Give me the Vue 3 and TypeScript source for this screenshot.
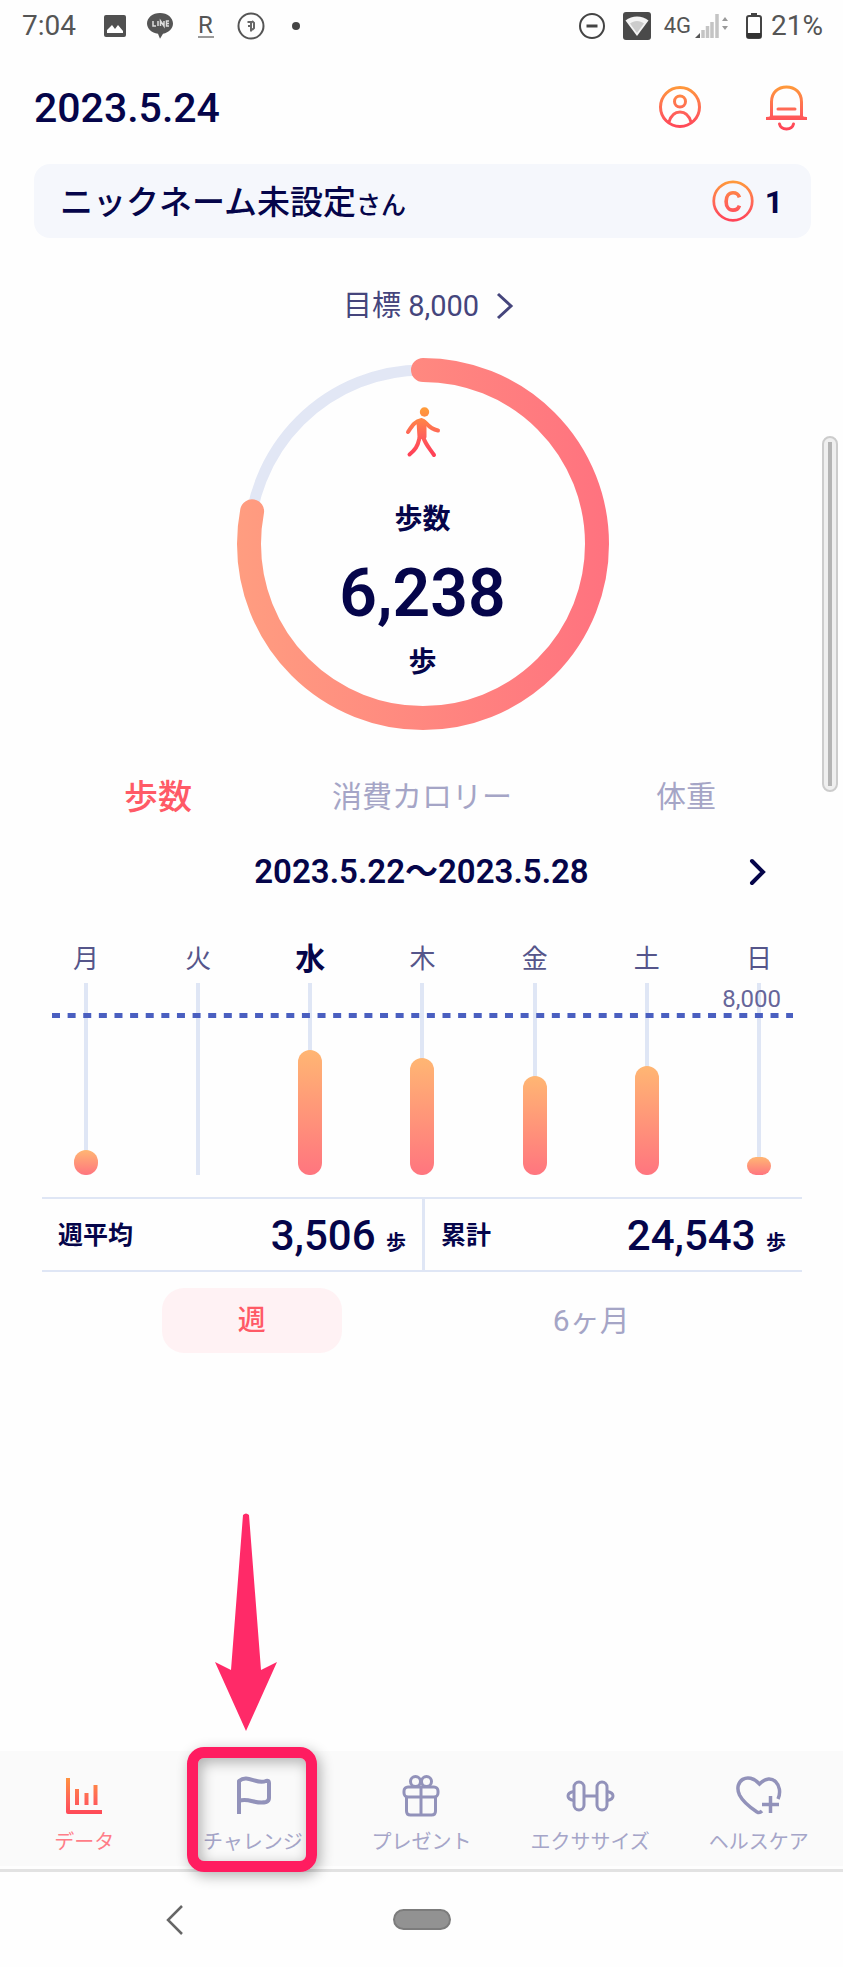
<script setup lang="ts">
interface Day {
  label: string
  height: number
  today?: boolean
}

const days: Day[] = [
  { label: '月', height: 25 },
  { label: '火', height: 0 },
  { label: '水', height: 125, today: true },
  { label: '木', height: 117 },
  { label: '金', height: 99 },
  { label: '土', height: 109 },
  { label: '日', height: 18 },
]

const goal = 8000
const steps = 6238
const radius = 174
const circumference = 2 * Math.PI * radius
const arc = `${(circumference * steps) / goal} ${circumference}`
const format = (n: number): string => n.toLocaleString('en-US')
</script>

<template>
  <div class="page">
    <svg class="defs" width="0" height="0" aria-hidden="true">
      <defs>
        <linearGradient id="warm" gradientUnits="userSpaceOnUse" x1="0" y1="2" x2="0" y2="46">
          <stop offset="0" stop-color="#ff9a3a" />
          <stop offset="0.6" stop-color="#ff6259" />
          <stop offset="1" stop-color="#ff4257" />
        </linearGradient>
        <linearGradient id="ring" gradientUnits="userSpaceOnUse" x1="0" y1="0" x2="0" y2="372">
          <stop offset="0" stop-color="#ff9d80" />
          <stop offset="1" stop-color="#ff727f" />
        </linearGradient>
      </defs>
    </svg>

    <div class="status">
      <span class="clock">7:04</span>
      <svg class="s-image" width="24" height="24" viewBox="0 0 24 24">
        <rect x="1" y="1" width="22" height="22" rx="2" fill="#505050" />
        <path d="M4 19v-3l5-5 3 4 3-4 5 6v2z" fill="#fff" />
      </svg>
      <svg class="s-line" width="28" height="28" viewBox="0 0 28 28">
        <path d="M14 1C6.500 1 1 5.800 1 11.500c0 5 4.500 9.300 11 10.300l2 5 3-5c6-1.300 10-5.500 10-10.300C27 5.800 21.500 1 14 1z" fill="#555" />
        <path d="M7 9v5h3M12 9v5M14.500 14V9l3.500 5V9M23 9h-2.500v5H23M20.500 11.500H23" fill="none" stroke="#ddd" stroke-width="1.500" />
      </svg>
      <span class="s-r">R</span>
      <svg class="s-coin" width="28" height="28" viewBox="0 0 28 28">
        <circle cx="14" cy="14" r="12.500" fill="none" stroke="#555" stroke-width="2" />
        <path d="M10.500 10H14v9.500M11 14h3M15 9l2 2v5l-2 2" fill="none" stroke="#666" stroke-width="2" />
      </svg>
      <span class="s-dot"></span>
      <span class="grow"></span>
      <svg class="s-dnd" width="28" height="28" viewBox="0 0 28 28">
        <circle cx="14" cy="14" r="12" fill="none" stroke="#444" stroke-width="2" />
        <path d="M8.500 14h11" stroke="#444" stroke-width="3" />
      </svg>
      <svg class="s-wifi" width="30" height="30" viewBox="0 0 30 30">
        <rect x="1" y="1" width="28" height="28" rx="3" fill="#4a4a4a" />
        <path d="M3.500 9.500C10 4 20 4 26.500 9.500L15 25z" fill="#f4f4f4" />
        <path d="M8 12.500c4-3.500 10-3.500 14 0L15 22z" fill="#ccc" />
      </svg>
      <span class="s-net">4G</span>
      <svg class="s-signal" width="34" height="26" viewBox="0 0 34 26">
        <path d="M0 25l5-5v5z" fill="#555" />
        <path d="M8 25v-8M12.500 25v-12M17 25V9M22 25V1" stroke="#c4c4c4" stroke-width="3.500" />
        <path d="M27 8l3-4 3 4zM27 13l3 4 3-4z" fill="#999" />
      </svg>
      <svg class="s-battery" width="18" height="28" viewBox="0 0 18 28">
        <path d="M6 1h6v3h-6z" fill="#444" />
        <rect x="2" y="4" width="14" height="22" rx="2" fill="none" stroke="#444" stroke-width="2" />
        <path d="M2 21h14v5H2z" fill="#333" />
      </svg>
      <span class="clock">21%</span>
    </div>

    <header class="header">
      <h1 class="today">2023.5.24</h1>
      <button class="icon-btn" type="button" aria-label="プロフィール">
        <svg width="48" height="48" viewBox="0 0 48 48" fill="none" stroke="url(#warm)" stroke-width="3">
          <circle cx="24" cy="23" r="19.500" />
          <circle cx="24" cy="17.500" r="5.500" />
          <path d="M13 38c2-6.500 6-10 11-10s9 3.500 11 10" />
        </svg>
      </button>
      <button class="icon-btn" type="button" aria-label="お知らせ">
        <svg width="48" height="48" viewBox="0 0 48 48" fill="none" stroke="url(#warm)" stroke-width="3" stroke-linecap="round">
          <path d="M9.500 33V18C9.500 8.500 16 3 24.500 3s15 5.500 15 15v15" />
          <path d="M4 34.500c3 0 5-1 5.500-1.500h30c.5.500 2.500 1.500 5.500 1.500zM16 25h17M17.500 40c1.500 6.500 12.500 6.500 14 0" />
        </svg>
      </button>
    </header>

    <main class="main">
      <section class="user">
        <p class="user-name">ニックネーム未設定<small>さん</small></p>
        <svg width="44" height="44" viewBox="0 0 48 48" fill="none" stroke="url(#warm)">
          <circle cx="24" cy="24" r="21" stroke-width="3" />
          <path d="M31 20c-1-3-3.500-5-7-5-4.500 0-7.500 4-7.500 9.500s3 9.500 7.500 9.500c3.500 0 6-2 7-5" stroke-width="4" />
        </svg>
        <span class="coins">1</span>
      </section>

      <button class="goal" type="button">
        目標 {{ format(goal) }}
        <svg width="18" height="28" viewBox="0 0 18 28" fill="none" stroke="#45457c" stroke-width="3">
          <path d="M2 2l13 12L2 26" />
        </svg>
      </button>

      <section class="gauge">
        <svg class="gauge-ring" viewBox="0 0 372 372" fill="none" aria-hidden="true">
          <circle cx="186" cy="186" :r="radius" stroke="#e2e7f5" stroke-width="11" />
          <circle cx="186" cy="186" :r="radius" stroke="url(#ring)" stroke-width="24" stroke-linecap="round" :stroke-dasharray="arc" class="gauge-arc" />
        </svg>
        <div class="gauge-body">
          <svg width="34" height="50" viewBox="0 0 34 50" fill="none" stroke="url(#warm)" stroke-width="4" stroke-linecap="round" stroke-linejoin="round">
            <circle cx="18.500" cy="5" r="4.700" fill="url(#warm)" stroke="none" />
            <path d="M2 25c4-6 7-11 13.500-12 5 .5 5 8 16.500 10.500" />
            <path d="M12.500 15l6 0v15l-5 0z" fill="url(#warm)" />
            <path d="M13.500 31C11.500 40 9 43 3.500 47.500M17.500 31c2 6 5 9 10.500 17" />
          </svg>
          <span class="gauge-label">歩数</span>
          <strong class="gauge-value">{{ format(steps) }}</strong>
          <span class="gauge-label">歩</span>
        </div>
      </section>

      <div class="tabs">
        <button class="tab active" type="button">歩数</button>
        <button class="tab" type="button">消費カロリー</button>
        <button class="tab" type="button">体重</button>
      </div>

      <div class="range">
        <span></span>
        <h2 class="range-text">2023.5.22〜2023.5.28</h2>
        <button class="next" type="button" aria-label="次の週">
          <svg width="20" height="28" viewBox="0 0 20 28" fill="none" stroke="#05054a" stroke-width="4" stroke-linecap="round">
            <path d="M4 3l11 11L4 25" />
          </svg>
        </button>
      </div>

      <section class="chart">
        <div v-for="d in days" :key="d.label" class="day">
          <span class="day-label" :class="{ now: d.today }">{{ d.label }}</span>
          <div class="plot">
            <div class="bar" :style="{ height: d.height + 'px' }"></div>
          </div>
        </div>
        <svg class="goal-line" height="5" aria-hidden="true">
          <line x1="0" y1="2.500" x2="100%" y2="2.500" stroke="#4a5fc0" stroke-width="5" stroke-dasharray="8 7.620" />
        </svg>
        <span class="goal-mark">{{ format(goal) }}</span>
      </section>

      <dl class="totals">
        <div class="total">
          <dt>週平均</dt>
          <dd>3,506 <small>歩</small></dd>
        </div>
        <div class="total">
          <dt>累計</dt>
          <dd>24,543 <small>歩</small></dd>
        </div>
      </dl>

      <div class="periods">
        <button class="period active" type="button">週</button>
        <button class="period" type="button">6ヶ月</button>
      </div>
    </main>

    <nav class="nav">
      <a class="nav-item active" href="#data">
        <svg width="48" height="48" viewBox="0 0 48 48" fill="none" stroke="url(#warm)" stroke-width="4" stroke-linejoin="round">
          <path d="M8 6v34h34M17 17v16M26.500 21v12M35.500 13v20" />
        </svg>
        <span>データ</span>
      </a>
      <a class="nav-item" href="#challenge">
        <svg width="48" height="48" viewBox="0 0 48 48" fill="none" stroke="#9292ba" stroke-width="4" stroke-linejoin="round">
          <path d="M10 42V9c9-7 17 4 27 0q3-1 3 2v15q0 3-3 4C27 33 19 25 10 29" />
        </svg>
        <span>チャレンジ</span>
        <svg class="arrow" width="62" height="218" viewBox="0 0 62 218" aria-hidden="true">
          <path d="M28 2q3-3 6 0l12 155 16-8-31 69L0 149l16 8z" fill="#ff2a68" />
        </svg>
        <i class="highlight"></i>
      </a>
      <a class="nav-item" href="#present">
        <svg width="48" height="48" viewBox="0 0 48 48" fill="none" stroke="#9292ba" stroke-width="3">
          <rect x="7" y="15" width="34" height="10" rx="4" />
          <path d="M9.500 25v14q0 4 4 4h21q4 0 4-4V25M24 15v28" />
          <circle cx="18.500" cy="9.500" r="5" />
          <circle cx="29.500" cy="9.500" r="5" />
        </svg>
        <span>プレゼント</span>
      </a>
      <a class="nav-item" href="#exercise">
        <svg width="48" height="48" viewBox="0 0 48 48" fill="none" stroke="#9292ba" stroke-width="3">
          <rect x="8" y="10" width="10" height="28" rx="5" />
          <rect x="31" y="10" width="10" height="28" rx="5" />
          <path d="M18 24h13M8 19.500Q2 20.500 2 24t6 4.500M41 19.500q6 1 6 4.500t-6 4.500" />
        </svg>
        <span>エクササイズ</span>
      </a>
      <a class="nav-item" href="#health">
        <svg width="48" height="48" viewBox="0 0 48 48" fill="none" stroke="#9292ba" stroke-width="3.500">
          <path d="M43 27C49 14 37 -1 24.500 12 13 -1 -2 9 4.500 23 8 30 16 36 22 40q2.500 1.500 5-1" />
          <path d="M35.500 24v17M27 32.500h17" />
        </svg>
        <span>ヘルスケア</span>
      </a>
    </nav>

    <div class="system">
      <button class="back" type="button" aria-label="戻る">
        <svg width="20" height="30" viewBox="0 0 20 30" fill="none" stroke="#666" stroke-width="2.500">
          <path d="M17 1L3 15l14 14" />
        </svg>
      </button>
      <button class="home" type="button" aria-label="ホーム"></button>
      <span></span>
    </div>

    <div class="scroll"></div>
  </div>
</template>

<style>
body {
  margin: 0;
  background: #fefefe;
}
</style>

<style scoped>
.page {
  position: relative;
  display: flex;
  flex-direction: column;
  min-height: 100vh;
  color: #05054a;
  font-family: Roboto, "Noto Sans CJK JP", sans-serif;
  font-weight: 400;
}
.page * {
  box-sizing: border-box;
}
.defs {
  position: absolute;
}
svg {
  display: block;
  flex: none;
  overflow: visible;
}
button {
  margin: 0;
  padding: 0;
  border: 0;
  background: none;
  color: inherit;
  font: inherit;
  cursor: pointer;
}
h1, h2, p, dl, dd {
  margin: 0;
}

.status {
  display: flex;
  align-items: center;
  height: 52px;
  padding: 0 20px 0 22px;
  color: #555;
}
.clock {
  font-size: 28px;
  line-height: 32px;
}
.s-image { margin-left: 27px; }
.s-line { margin-left: 19px; }
.s-r {
  width: 16px;
  margin-left: 24px;
  border-bottom: 2px solid #999;
  font-size: 24px;
  font-weight: 400;
  line-height: 22px;
}
.s-coin { margin-left: 23px; }
.s-dot {
  width: 8px;
  height: 8px;
  margin-left: 27px;
  border-radius: 50%;
  background: #444;
}
.grow { flex: 1; }
.s-wifi { margin-left: 16px; }
.s-net {
  margin-left: 12px;
  font-size: 22px;
  line-height: 28px;
}
.s-signal { margin-left: 4px; }
.s-battery {
  margin-left: 16px;
  margin-right: 8px;
}

.header {
  display: flex;
  align-items: center;
  height: 112px;
  padding: 0 33px 0 34px;
}
.today {
  flex: 1;
  font-size: 41px;
  font-weight: 500;
  line-height: 48px;
}
.icon-btn + .icon-btn {
  margin-left: 58px;
}

.main {
  display: flex;
  flex: 1;
  flex-direction: column;
}
.user {
  display: flex;
  align-items: center;
  height: 74px;
  margin: 0 32px 0 34px;
  padding: 0 28px 0 26px;
  border-radius: 16px;
  background: #f5f7fc;
}
.user-name {
  flex: 1;
  padding-top: 6px;
  font-size: 33px;
  font-weight: 500;
  line-height: 44px;
}
.user-name small {
  font-size: 25px;
}
.coins {
  margin-left: 10px;
  padding-top: 2px;
  font-size: 32px;
  font-weight: 700;
  line-height: 40px;
}

.goal {
  display: flex;
  align-items: center;
  align-self: center;
  gap: 17px;
  height: 36px;
  margin-top: 50px;
  margin-left: 14px;
  color: #45457c;
  font-size: 29px;
  line-height: 36px;
}

.gauge {
  position: relative;
  align-self: center;
  width: 372px;
  height: 372px;
  margin-top: 34px;
  margin-left: 2px;
}
.gauge-ring {
  position: absolute;
  inset: 0;
}
.gauge-arc {
  transform: rotate(-90deg);
  transform-origin: center;
}
.gauge-body {
  display: flex;
  flex-direction: column;
  align-items: center;
  padding-top: 49px;
}
.gauge-label {
  margin-top: 43px;
  font-size: 28px;
  font-weight: 700;
  line-height: 40px;
}
.gauge-value {
  margin-top: 15px;
  font-size: 66px;
  font-weight: 600;
  line-height: 78px;
}
.gauge-value + .gauge-label {
  margin-top: 10px;
}

.tabs {
  display: grid;
  grid-template-columns: repeat(3, 1fr);
  align-items: center;
  height: 44px;
  margin: 45px 25px 0 26px;
}
.tab {
  color: #a5a5c6;
  font-size: 30px;
  line-height: 44px;
}
.tab.active {
  color: #ff5a66;
  font-size: 34px;
  font-weight: 500;
}

.range {
  display: grid;
  grid-template-columns: 1fr auto 1fr;
  align-items: center;
  height: 44px;
  margin: 31px 75px 0;
}
.range-text {
  font-size: 33px;
  font-weight: 600;
  line-height: 44px;
}
.next {
  justify-self: end;
}

.chart {
  position: relative;
  display: grid;
  grid-template-columns: repeat(7, 1fr);
  margin: 45px 28px 0 30px;
}
.day {
  display: flex;
  flex-direction: column;
  align-items: center;
  gap: 4px;
}
.day-label {
  height: 40px;
  color: #55558a;
  font-size: 26px;
  line-height: 40px;
}
.day-label.now {
  color: #05054a;
  font-size: 30px;
  font-weight: 700;
}
.plot {
  display: flex;
  align-items: flex-end;
  justify-content: center;
  width: 24px;
  height: 192px;
  background: linear-gradient(#dfe6f5, #dfe6f5) center / 4px 100% no-repeat;
}
.bar {
  width: 24px;
  border-radius: 12px;
  background: linear-gradient(#ffb673, #ff757f);
}
.goal-line {
  position: absolute;
  top: 74px;
  left: 22px;
  width: calc(100% - 44px);
  overflow: hidden;
}
.goal-mark {
  position: absolute;
  top: 46px;
  right: 34px;
  color: #66669a;
  font-size: 24px;
  line-height: 28px;
}

.totals {
  display: grid;
  grid-template-columns: repeat(2, 1fr);
  height: 75px;
  margin: 22px 41px 0 42px;
  border-top: 2px solid #dfe6f5;
  border-bottom: 2px solid #dfe6f5;
}
.total {
  display: flex;
  align-items: center;
  justify-content: space-between;
  padding: 0 16px;
}
.total + .total {
  border-left: 3px solid #dfe6f5;
}
.total dt {
  padding-top: 2px;
  font-size: 25px;
  font-weight: 700;
  line-height: 36px;
}
.total dd {
  padding-top: 10px;
  font-size: 42px;
  font-weight: 500;
  line-height: 48px;
}
.total small {
  font-size: 20px;
  font-weight: 700;
}

.periods {
  display: grid;
  grid-template-columns: repeat(2, 1fr);
  justify-items: center;
  margin: 16px 82px 0;
}
.period {
  width: 180px;
  height: 65px;
  border-radius: 22px;
  color: #a5a5c6;
  font-size: 30px;
  line-height: 40px;
}
.period.active {
  background: #fff2f4;
  color: #ff5a66;
  font-size: 28px;
  font-weight: 500;
}

.nav {
  display: grid;
  grid-template-columns: repeat(5, 1fr);
  height: 121px;
  border-bottom: 3px solid #e2e2e2;
  background: linear-gradient(#fafafa, #fafafa) top / 100% 115px no-repeat;
}
.nav-item {
  position: relative;
  display: flex;
  flex-direction: column;
  align-items: center;
  gap: 8px;
  padding-top: 21px;
  color: #a5a5c8;
  font-size: 20px;
  line-height: 28px;
  text-decoration: none;
  white-space: nowrap;
}
.nav-item.active {
  color: #ff7d88;
}
.highlight {
  position: absolute;
  top: -4px;
  left: 50%;
  width: 130px;
  height: 125px;
  margin-left: -66px;
  border: 11px solid #ff1c60;
  border-radius: 17px;
  box-shadow: 3px 4px 14px rgba(0, 0, 0, 0.3), inset 3px 4px 14px rgba(0, 0, 0, 0.3);
}
.arrow {
  position: absolute;
  bottom: 100%;
  left: 50%;
  margin: 0 0 20px -38px;
}

.system {
  display: grid;
  grid-template-columns: 1fr auto 1fr;
  align-items: center;
  height: 95px;
}
.back {
  justify-self: center;
  padding-right: 42px;
}
.home {
  width: 58px;
  height: 21px;
  border: 2px solid #7c7c7c;
  border-radius: 11px;
  background: #929292;
}

.scroll {
  position: absolute;
  top: 436px;
  right: 5px;
  width: 16px;
  height: 356px;
  border: 2px solid #ccc;
  border-radius: 8px;
  background: linear-gradient(#b4b4b4, #b4b4b4) center / 4px calc(100% - 8px) no-repeat #efefef;
}
</style>
